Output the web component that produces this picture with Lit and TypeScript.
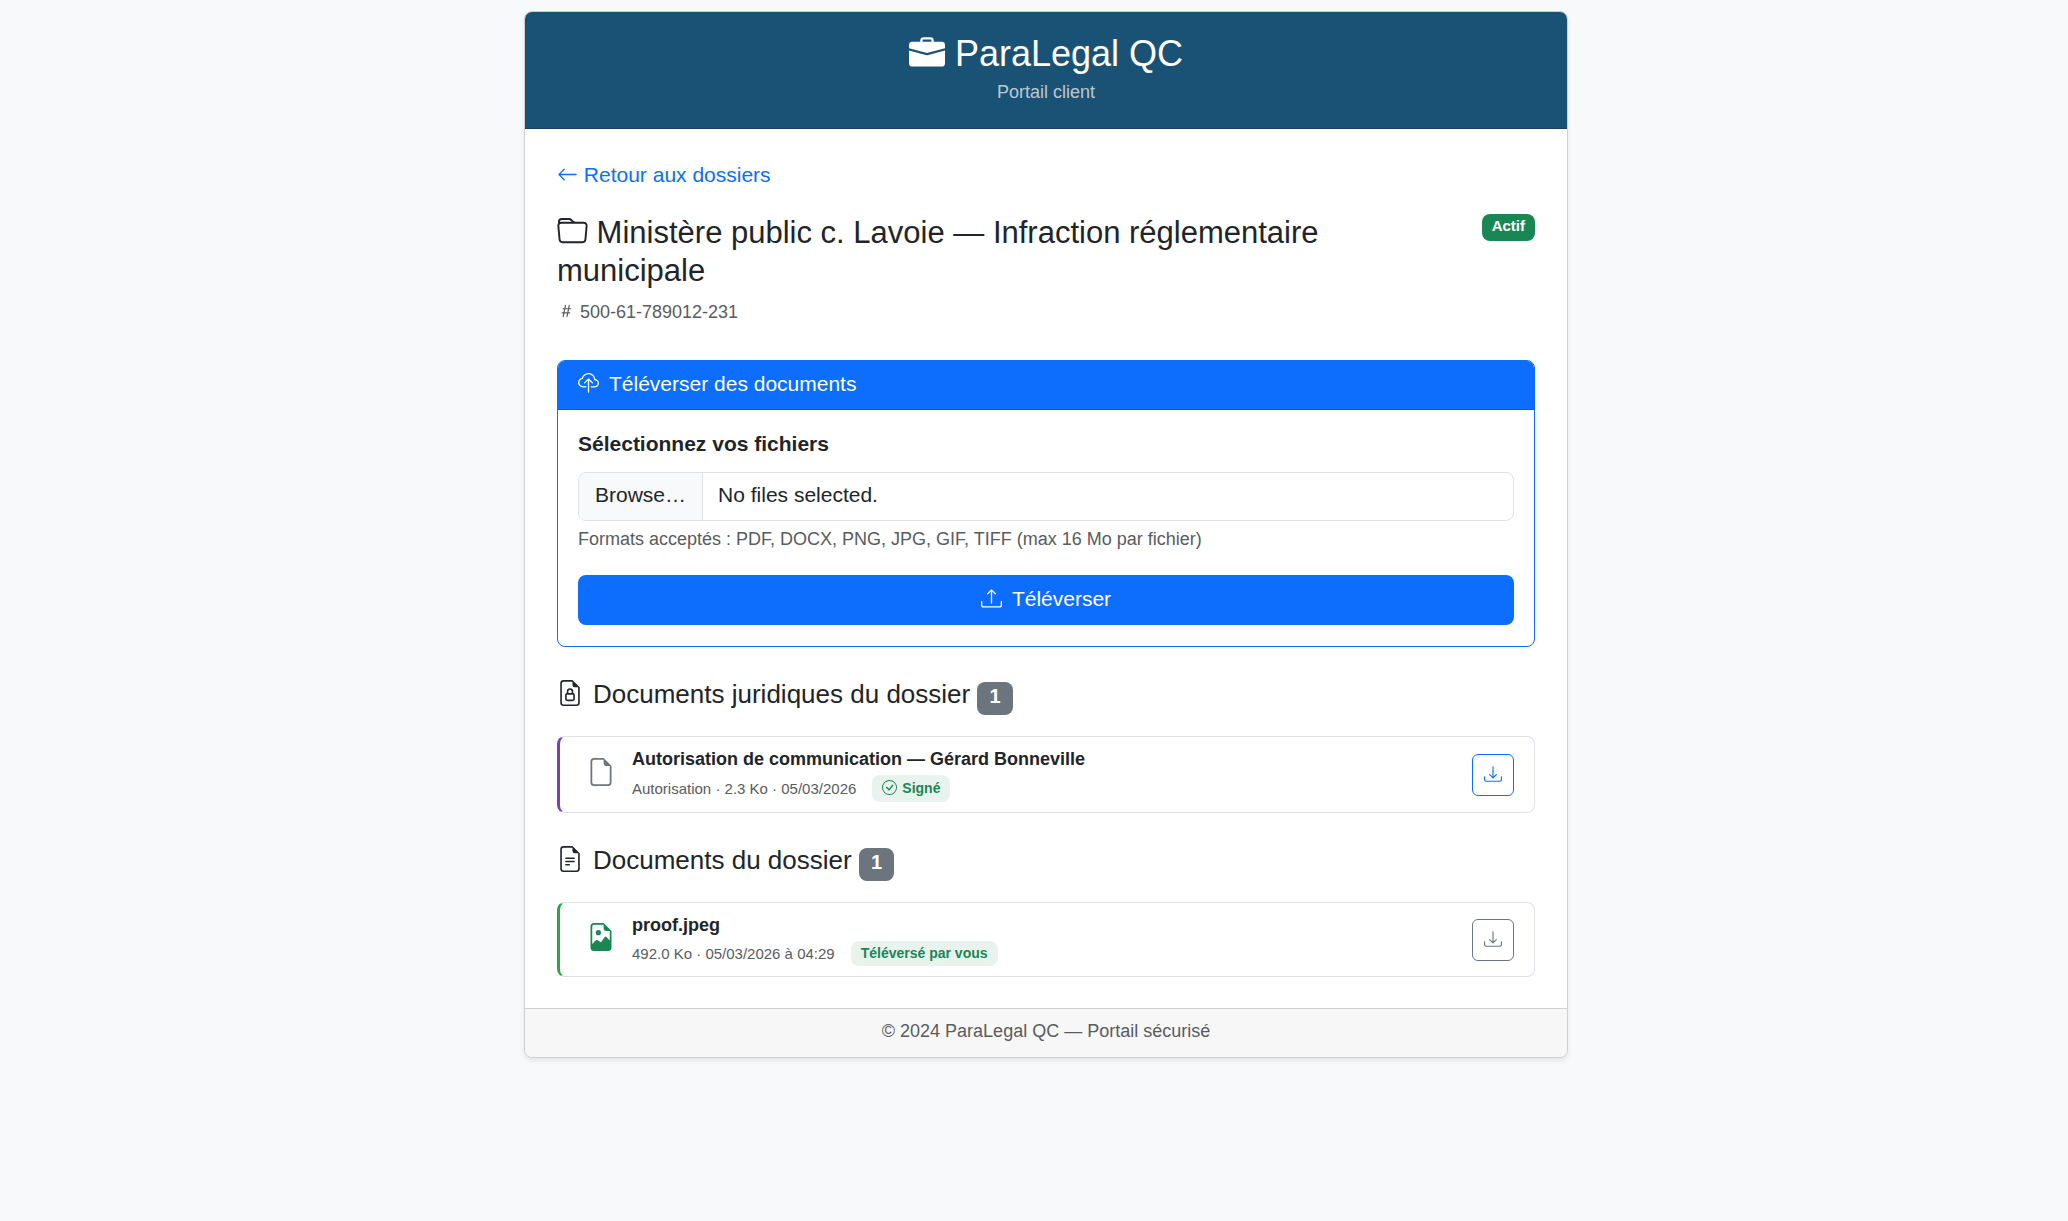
import { LitElement, html, css, svg, nothing } from "lit";
import { customElement, property, state } from "lit/decorators.js";
import { classMap } from "lit/directives/class-map.js";

const PAGE_OUTLINE =
  "M14 14V4.5L9.5 0H4a2 2 0 0 0-2 2v12a2 2 0 0 0 2 2h8a2 2 0 0 0 2-2M9.5 3A1.5 1.5 0 0 0 11 4.5h2V14a1 1 0 0 1-1 1H4a1 1 0 0 1-1-1V2a1 1 0 0 1 1-1h5.5z";
const TRAY =
  "M.5 9.9a.5.5 0 0 1 .5.5v2.5a1 1 0 0 0 1 1h12a1 1 0 0 0 1-1v-2.5a.5.5 0 0 1 1 0v2.5a2 2 0 0 1-2 2H2a2 2 0 0 1-2-2v-2.5a.5.5 0 0 1 .5-.5";

/** Icon outlines, all on a 16 by 16 grid. */
const ICONS: Record<string, string[]> = {
  briefcase: [
    "M6.5 1A1.5 1.5 0 0 0 5 2.5V3H1.5A1.5 1.5 0 0 0 0 4.5v1.384l7.614 2.03a1.5 1.5 0 0 0 .772 0L16 5.884V4.5A1.5 1.5 0 0 0 14.5 3H11v-.5A1.5 1.5 0 0 0 9.5 1zm0 1h3a.5.5 0 0 1 .5.5V3H6v-.5a.5.5 0 0 1 .5-.5",
    "M0 12.5A1.5 1.5 0 0 0 1.5 14h13a1.5 1.5 0 0 0 1.5-1.5V6.85L8.129 8.947a.5.5 0 0 1-.258 0L0 6.85z",
  ],
  back: [
    "M15 8a.5.5 0 0 0-.5-.5H2.707l3.147-3.146a.5.5 0 1 0-.708-.708l-4 4a.5.5 0 0 0 0 .708l4 4a.5.5 0 0 0 .708-.708L2.707 8.5H14.5A.5.5 0 0 0 15 8",
  ],
  folder: [
    "M.54 3.87.5 3a2 2 0 0 1 2-2h3.672a2 2 0 0 1 1.414.586l.828.828A2 2 0 0 0 9.828 3h3.982a2 2 0 0 1 1.992 2.181l-.637 7A2 2 0 0 1 13.174 14H2.826a2 2 0 0 1-1.991-1.819l-.637-7a2 2 0 0 1 .342-1.31zM2.19 4a1 1 0 0 0-.996 1.09l.637 7a1 1 0 0 0 .995.91h10.348a1 1 0 0 0 .995-.91l.637-7A1 1 0 0 0 13.81 4zm4.69-1.707A1 1 0 0 0 6.172 2H2.5a1 1 0 0 0-1 .981l.006.139q.323-.119.684-.12h5.396z",
  ],
  hash: [
    "M8.39 12.648a1.32 1.32 0 0 0-.015.18c0 .305.21.508.5.508.266 0 .492-.172.555-.477l.554-2.703h1.204c.421 0 .617-.234.617-.547 0-.312-.188-.53-.617-.53h-.985l.516-2.524h1.265c.43 0 .618-.227.618-.547 0-.313-.188-.524-.618-.524h-1.046l.476-2.304a1.06 1.06 0 0 0 .016-.164.51.51 0 0 0-.516-.516.54.54 0 0 0-.539.43l-.523 2.554H7.617l.477-2.304c.008-.04.015-.118.015-.164a.512.512 0 0 0-.523-.516.539.539 0 0 0-.531.43L6.53 5.484H5.414c-.43 0-.617.22-.617.532 0 .312.187.539.617.539h.906l-.515 2.523H4.609c-.421 0-.609.219-.609.531 0 .313.188.547.61.547h.976l-.516 2.492c-.008.04-.015.125-.015.18 0 .305.21.508.5.508.265 0 .492-.172.554-.477l.555-2.703h2.242l-.515 2.492zm-1-6.109h2.266l-.515 2.563H6.859l.532-2.563z",
  ],
  cloud: [
    "M4.406 1.342A5.53 5.53 0 0 1 8 0c2.69 0 4.923 2 5.166 4.579C14.758 4.804 16 6.137 16 7.773 16 9.569 14.502 11 12.687 11H10a.5.5 0 0 1 0-1h2.688C13.979 10 15 8.988 15 7.773c0-1.216-1.02-2.228-2.313-2.228h-.5v-.5C12.188 2.825 10.328 1 8 1a4.53 4.53 0 0 0-2.941 1.1c-.757.652-1.153 1.438-1.153 2.055v.448l-.445.049C2.064 4.805 1 5.952 1 7.318 1 8.785 2.23 10 3.781 10H6a.5.5 0 0 1 0 1H3.781C1.708 11 0 9.366 0 7.318c0-1.763 1.266-3.223 2.942-3.593.143-.863.698-1.723 1.464-2.383",
    "M7.646 4.146a.5.5 0 0 1 .708 0l3 3a.5.5 0 0 1-.708.708L8.5 5.707V14.5a.5.5 0 0 1-1 0V5.707L5.354 7.854a.5.5 0 1 1-.708-.708z",
  ],
  upload: [
    TRAY,
    "M7.646 1.146a.5.5 0 0 1 .708 0l3 3a.5.5 0 0 1-.708.708L8.5 2.707V11.5a.5.5 0 0 1-1 0V2.707L5.354 4.854a.5.5 0 1 1-.708-.708z",
  ],
  download: [
    TRAY,
    "M7.646 11.854a.5.5 0 0 0 .708 0l3-3a.5.5 0 0 0-.708-.708L8.5 10.293V1.5a.5.5 0 0 0-1 0v8.793L5.354 8.146a.5.5 0 1 0-.708.708z",
  ],
  fileLock: [
    "M10 7v1.076c.54.166 1 .597 1 1.224v2.4c0 .816-.781 1.3-1.5 1.3h-3c-.719 0-1.5-.484-1.5-1.3V9.3c0-.627.46-1.058 1-1.224V7a2 2 0 1 1 4 0M7 7v1h2V7a1 1 0 0 0-2 0M6 9.3v2.4c0 .042.02.107.105.175A.64.64 0 0 0 6.5 12h3a.64.64 0 0 0 .395-.125c.085-.068.105-.133.105-.175V9.3c0-.042-.02-.107-.105-.175A.64.64 0 0 0 9.5 9h-3a.64.64 0 0 0-.395.125C6.02 9.193 6 9.258 6 9.3",
    PAGE_OUTLINE,
  ],
  fileText: [
    "M5.5 7a.5.5 0 0 0 0 1h5a.5.5 0 0 0 0-1zM5 9.5a.5.5 0 0 1 .5-.5h5a.5.5 0 0 1 0 1h-5a.5.5 0 0 1-.5-.5m0 2a.5.5 0 0 1 .5-.5h2a.5.5 0 0 1 0 1h-2a.5.5 0 0 1-.5-.5",
    PAGE_OUTLINE,
  ],
  file: [PAGE_OUTLINE],
  fileImage: [
    "M6.502 7a1.5 1.5 0 1 0 0-3 1.5 1.5 0 0 0 0 3",
    "M14 14a2 2 0 0 1-2 2H4a2 2 0 0 1-2-2V2a2 2 0 0 1 2-2h5.5L14 4.5zM4 1a1 1 0 0 0-1 1v10l2.224-2.224a.5.5 0 0 1 .61-.075L8 11l2.157-3.02a.5.5 0 0 1 .76-.063L13 10V4.5h-2A1.5 1.5 0 0 1 9.5 3V1z",
  ],
  check: [
    "M8 15A7 7 0 1 1 8 1a7 7 0 0 1 0 14m0 1A8 8 0 1 0 8 0a8 8 0 0 0 0 16",
    "m10.97 4.97-.02.022-3.473 4.425-2.093-2.094a.75.75 0 0 0-1.06 1.06L6.97 11.03a.75.75 0 0 0 1.079-.02l3.992-4.99a.75.75 0 0 0-1.071-1.05",
  ],
};

const icon = (name: string) => html`<svg
  class="icon"
  viewBox="0 0 16 16"
  fill="currentColor"
  aria-hidden="true"
>${ICONS[name].map((d) => svg`<path d=${d}></path>`)}</svg>`;

const shared = css`
  *,
  *::before,
  *::after {
    box-sizing: border-box;
  }
  .icon {
    display: inline-block;
    width: 1em;
    height: 1em;
    vertical-align: -0.125em;
  }
`;

interface DocumentEntry {
  title: string;
  meta: string;
  tag: string;
  tagIcon?: string;
  icon: string;
  kind: "legal" | "client";
}

@customElement("document-row")
export class DocumentRow extends LitElement {
  @property({ attribute: false }) entry!: DocumentEntry;

  static styles = [
    shared,
    css`
      :host {
        display: block;
      }
      .row {
        display: flex;
        align-items: center;
        padding: 10px 20px;
        background: #fff;
        border: 1px solid #dee2e6;
        border-left-width: 3px;
        border-radius: 8px;
      }
      .legal {
        border-left-color: #6f42c1;
      }
      .client {
        border-left-color: #28a745;
      }
      .glyph {
        flex: none;
        width: 42px;
        margin-right: 10px;
        padding-bottom: 6px;
        display: flex;
        justify-content: center;
        font-size: 28px;
        color: #6c757d;
      }
      .client .glyph {
        color: #198754;
      }
      .text {
        flex: 1;
        min-width: 0;
      }
      .title {
        font-size: 18px;
        line-height: 24px;
        font-weight: 700;
      }
      .meta {
        display: flex;
        flex-wrap: wrap;
        align-items: center;
        gap: 16px;
        margin-top: 4px;
        font-size: 15px;
        line-height: 19px;
        color: #595c5f;
      }
      .tag {
        padding: 3px 10px;
        border-radius: 8px;
        background: #e8f3ee;
        color: #198754;
        font-size: 14px;
        font-weight: 700;
      }
      .legal .tag {
        padding: 4px 10px;
      }
      .tag .icon {
        font-size: 15px;
        margin-right: 5px;
      }
      .download {
        display: flex;
        align-items: center;
        justify-content: center;
        width: 42px;
        height: 42px;
        padding: 0 0 2px;
        font-size: 18px;
        color: #0d6efd;
        background: transparent;
        border: 1px solid currentColor;
        border-radius: 6px;
        cursor: pointer;
      }
      .client .download {
        color: #6c757d;
      }
    `,
  ];

  render() {
    const e = this.entry;
    return html`
      <article class=${classMap({ row: true, [e.kind]: true })}>
        <span class="glyph">${icon(e.icon)}</span>
        <div class="text">
          <div class="title">${e.title}</div>
          <div class="meta">
            <span>${e.meta}</span>
            <span class="tag">${e.tagIcon ? icon(e.tagIcon) : nothing}${e.tag}</span>
          </div>
        </div>
        <button class="download" type="button" aria-label="Télécharger">${icon("download")}</button>
      </article>
    `;
  }
}

@customElement("upload-card")
export class UploadCard extends LitElement {
  @state() private names: string[] = [];

  static styles = [
    shared,
    css`
      :host {
        display: block;
      }
      .card {
        border: 1px solid #0d6efd;
        border-radius: 8px;
        overflow: hidden;
        background: #fff;
      }
      .head {
        padding: 7px 20px 10px;
        color: #fff;
        background: #0d6efd;
        border-bottom: 1px solid #0b5ccf;
        font-size: 21px;
        line-height: 31px;
        font-weight: 400;
        margin: 0;
      }
      .head .icon,
      .send .icon {
        margin-right: 10px;
      }
      .body {
        padding: 18px 20px 21px;
      }
      .label {
        display: block;
        margin-bottom: 13px;
        font-weight: 700;
      }
      .picker {
        position: relative;
        display: flex;
        overflow: hidden;
        border: 1px solid #dee2e6;
        border-radius: 8px;
      }
      .picker:focus-within {
        border-color: #86b7fe;
      }
      .browse,
      .chosen {
        padding: 6px 16px 10px;
      }
      .browse {
        background: #f8f9fa;
        border-right: 1px solid #dee2e6;
      }
      .chosen {
        padding-left: 15px;
      }
      .file {
        position: absolute;
        inset: 0;
        width: 100%;
        height: 100%;
        opacity: 0;
        cursor: pointer;
      }
      .hint {
        margin: 5px 0 22px;
        font-size: 18px;
        line-height: 27px;
        color: #595c5f;
      }
      .send {
        display: block;
        width: 100%;
        padding: 7px 16px 10px;
        font: inherit;
        line-height: 33px;
        color: #fff;
        background: #0d6efd;
        border: 0;
        border-radius: 8px;
        cursor: pointer;
      }
    `,
  ];

  private pick(e: Event) {
    const files = (e.target as HTMLInputElement).files;
    this.names = files ? Array.from(files, (f) => f.name) : [];
  }

  render() {
    return html`
      <section class="card">
        <h3 class="head">${icon("cloud")}Téléverser des documents</h3>
        <form class="body" @submit=${(e: Event) => e.preventDefault()}>
          <label class="label" for="files">Sélectionnez vos fichiers</label>
          <div class="picker">
            <span class="browse" aria-hidden="true">Browse…</span>
            <span class="chosen" aria-hidden="true"
              >${this.names.length ? this.names.join(", ") : "No files selected."}</span
            >
            <input
              class="file"
              id="files"
              type="file"
              multiple
              accept=".pdf,.docx,.png,.jpg,.jpeg,.gif,.tiff"
              aria-describedby="hint"
              @change=${this.pick}
            />
          </div>
          <p class="hint" id="hint">Formats acceptés : PDF, DOCX, PNG, JPG, GIF, TIFF (max 16 Mo par fichier)</p>
          <button class="send" type="submit">${icon("upload")}Téléverser</button>
        </form>
      </section>
    `;
  }
}

const SECTIONS: { title: string; icon: string; entries: DocumentEntry[] }[] = [
  {
    title: "Documents juridiques du dossier",
    icon: "fileLock",
    entries: [
      {
        title: "Autorisation de communication — Gérard Bonneville",
        meta: "Autorisation · 2.3 Ko · 05/03/2026",
        tag: "Signé",
        tagIcon: "check",
        icon: "file",
        kind: "legal",
      },
    ],
  },
  {
    title: "Documents du dossier",
    icon: "fileText",
    entries: [
      {
        title: "proof.jpeg",
        meta: "492.0 Ko · 05/03/2026 à 04:29",
        tag: "Téléversé par vous",
        icon: "fileImage",
        kind: "client",
      },
    ],
  },
];

@customElement("app-root")
export class AppRoot extends LitElement {
  static styles = [
    shared,
    css`
      :host {
        display: block;
        box-sizing: border-box;
        min-height: 100vh;
        padding: 11px 0 24px 24px;
        background: #f8f9fb;
        color: #212529;
        font-family: "Liberation Sans", Arial, sans-serif;
        font-size: 21px;
        line-height: 31px;
      }
      .portal {
        max-width: 1044px;
        margin: 0 auto;
        background: #fff;
        border: 1px solid #cfd0d1;
        border-radius: 8px;
        box-shadow: 0 3px 5px rgba(0, 0, 0, 0.075);
        overflow: hidden;
      }
      .banner {
        padding: 20px 20px 22px;
        text-align: center;
        color: #fff;
        background: #1a5276;
        border-bottom: 1px solid #154361;
      }
      .brand {
        margin: 0 0 4px;
        font-size: 36px;
        line-height: 43px;
        font-weight: 400;
      }
      .tagline {
        margin: 0;
        font-size: 18px;
        line-height: 27px;
        color: rgba(255, 255, 255, 0.7);
      }
      .content {
        padding: 30px 32px 31px;
      }
      .back {
        color: #0d6efd;
        text-decoration: none;
      }
      .case {
        display: flex;
        align-items: flex-start;
        justify-content: space-between;
        gap: 16px;
        margin: 24px 0 34px;
      }
      .case-title {
        margin: 0 0 9px;
        font-size: 31px;
        line-height: 38px;
        font-weight: 400;
      }
      .case-number {
        margin: 0;
        font-size: 18px;
        line-height: 27px;
        color: #595c5f;
      }
      .status {
        flex: none;
        padding: 4px 10px 8px;
        font-size: 15px;
        line-height: 15px;
        font-weight: 700;
        color: #fff;
        background: #198754;
        border-radius: 8px;
      }
      .section-title {
        margin: 32px 0 21px;
        font-size: 26px;
        line-height: 31px;
        font-weight: 400;
      }
      .section-title .icon {
        margin-right: 10px;
      }
      .count {
        display: inline-block;
        padding: 4px 12px 9px;
        font-size: 20px;
        line-height: 20px;
        font-weight: 700;
        color: #fff;
        background: #6c757d;
        border-radius: 8px;
      }
      .foot {
        padding: 9px 20px 12px;
        text-align: center;
        font-size: 18px;
        line-height: 27px;
        color: #595c5f;
        background: #f7f7f7;
        border-top: 1px solid #cfd0d1;
      }
    `,
  ];

  render() {
    return html`
      <div class="portal">
        <header class="banner">
          <h1 class="brand">${icon("briefcase")} ParaLegal QC</h1>
          <p class="tagline">Portail client</p>
        </header>
        <main class="content">
          <a class="back" href="#dossiers">${icon("back")} Retour aux dossiers</a>
          <div class="case">
            <div>
              <h2 class="case-title">
                ${icon("folder")} Ministère public c. Lavoie — Infraction réglementaire municipale
              </h2>
              <p class="case-number">${icon("hash")} 500-61-789012-231</p>
            </div>
            <span class="status">Actif</span>
          </div>
          <upload-card></upload-card>
          ${SECTIONS.map(
            (s) => html`
              <section>
                <h2 class="section-title">
                  ${icon(s.icon)}${s.title} <span class="count">${s.entries.length}</span>
                </h2>
                ${s.entries.map((e) => html`<document-row .entry=${e}></document-row>`)}
              </section>
            `,
          )}
        </main>
        <footer class="foot">© 2024 ParaLegal QC — Portail sécurisé</footer>
      </div>
    `;
  }
}
